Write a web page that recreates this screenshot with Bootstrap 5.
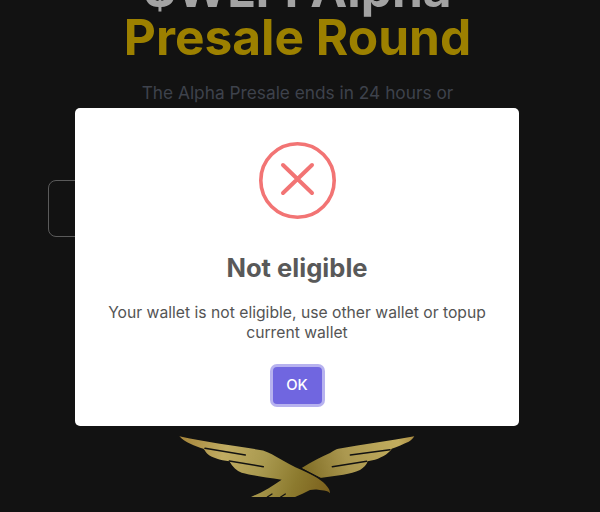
<!DOCTYPE html>
<html lang="en"><head><meta charset="utf-8">
<link href="https://cdn.jsdelivr.net/npm/bootstrap@5.3.0/dist/css/bootstrap.min.css" rel="stylesheet">
<style>
html,body{height:512px;overflow:hidden}
body{background:#121212;font-family:Inter,"Liberation Sans",sans-serif;position:relative}
.stage{height:512px;overflow:hidden;padding:0 53px 0 48px}
.top-line{font-size:49.6px;font-weight:700;line-height:46px;color:#a3a3a3;margin-top:-34px;white-space:nowrap}
.gold-line{font-size:49.6px;font-weight:700;line-height:50px;color:#9c8000;white-space:nowrap;margin:0}
.sub-line{font-size:17.3px;line-height:28px;color:#3e424c;margin-top:17px;margin-bottom:0}
.ghost-box{width:250px;height:57px;margin-top:73px;border:1px solid #5a5a5a;border-radius:8px}
.eagle{display:block;width:260px;height:87px;margin:188px 0 0 122px;filter:blur(.4px)}
.veil{position:absolute;inset:0;padding-top:108px}
.dialog-box{width:444px;height:318px;margin-left:75px;background:#fff;border-radius:5px;padding-top:32px}
.err-ring{display:block;width:80px;height:80px}
.dlg-title{font-size:25.6px;font-weight:700;line-height:32px;color:#595959;margin:32px 0 0}
.dlg-text{font-size:15.7px;line-height:19.5px;color:#545454;margin:19px 0 0;padding:0 30px}
.dlg-ok{margin-top:25px;background:#7066e0;color:#fff;border:0;border-radius:4px;font-size:14.8px;font-weight:500;width:49px;height:37px;padding:0;box-shadow:0 0 0 3px rgba(112,102,224,.5)}
.dlg-ok:hover,.dlg-ok:focus{background:#7066e0;color:#fff}
</style></head>
<body>
<div class="stage text-center">
  <div class="top-line">$WLFI Alpha</div>
  <h1 class="gold-line">Presale Round</h1>
  <p class="sub-line">The Alpha Presale ends in 24 hours or</p>
  <div class="ghost-box"></div>
  <svg class="eagle" viewBox="0 0 780 261" xmlns="http://www.w3.org/2000/svg">
    <defs>
      <linearGradient id="wingl" gradientUnits="userSpaceOnUse" x1="28" y1="34" x2="480" y2="200"><stop offset="0" stop-color="#a5843a"/><stop offset=".3" stop-color="#c0ac62"/><stop offset=".55" stop-color="#a9994f"/><stop offset=".78" stop-color="#8c7a2e"/><stop offset="1" stop-color="#7a5f1c"/></linearGradient>
      <linearGradient id="wingr" gradientUnits="userSpaceOnUse" x1="395" y1="150" x2="735" y2="34"><stop offset="0" stop-color="#7d6a22"/><stop offset=".4" stop-color="#ab9850"/><stop offset=".85" stop-color="#c2ad5e"/><stop offset="1" stop-color="#a98a40"/></linearGradient>
    </defs>
    <path fill="url(#wingr)" d="M395 129 C425 110 455 95 480 84 C490 76 498 73 505 71 C580 58 660 48 733 34 C728 42 722 47 716 50 C700 57 682 66 665 71 C662 80 640 96 615 104 L593 109 C590 120 582 128 570 135 C555 142 540 146 520 149 L450 159 Z"/>
    <path fill="url(#wingl)" d="M28 34 C100 50 190 62 265 74 C285 76 300 84 320 96 C345 110 370 125 395 135 C430 150 460 168 472 185 C478 192 480 198 480 205 C474 198 465 197 455 196 C440 192 430 193 420 195 C405 203 390 210 375 216 L243 216 C280 200 310 182 335 164 C290 158 240 150 215 143 C200 138 188 126 178 109 C150 105 125 98 112 86 C108 82 105 76 100 71 C75 64 45 52 28 34 Z"/>
    <g stroke="#121212" stroke-width="4.5" fill="none" stroke-linecap="round">
      <path d="M105 70 L226 90 M178 108 L280 125"/>
      <path d="M541 90 L660 74 M487 125 L590 109"/>
      <path d="M393 130 L452 160" stroke-width="3"/>
      <path d="M292 216 L306 207 M332 216 L346 207" stroke-width="4"/>
    </g>
  </svg>
</div>
<div class="veil">
  <div class="dialog-box text-center">
    <div class="d-flex justify-content-center">
      <svg class="err-ring" viewBox="0 0 80 80" xmlns="http://www.w3.org/2000/svg" fill="none" stroke="#f27474"><circle cx="40.5" cy="40.5" r="36.7" stroke-width="3.6"/><path d="M26 25 L55 53 M55 25 L26 53" stroke-width="4" stroke-linecap="round"/></svg>
    </div>
    <h2 class="dlg-title">Not eligible</h2>
    <p class="dlg-text">Your wallet is not eligible, use other wallet or topup current wallet</p>
    <button type="button" class="btn dlg-ok">OK</button>
  </div>
</div>
</body></html>
